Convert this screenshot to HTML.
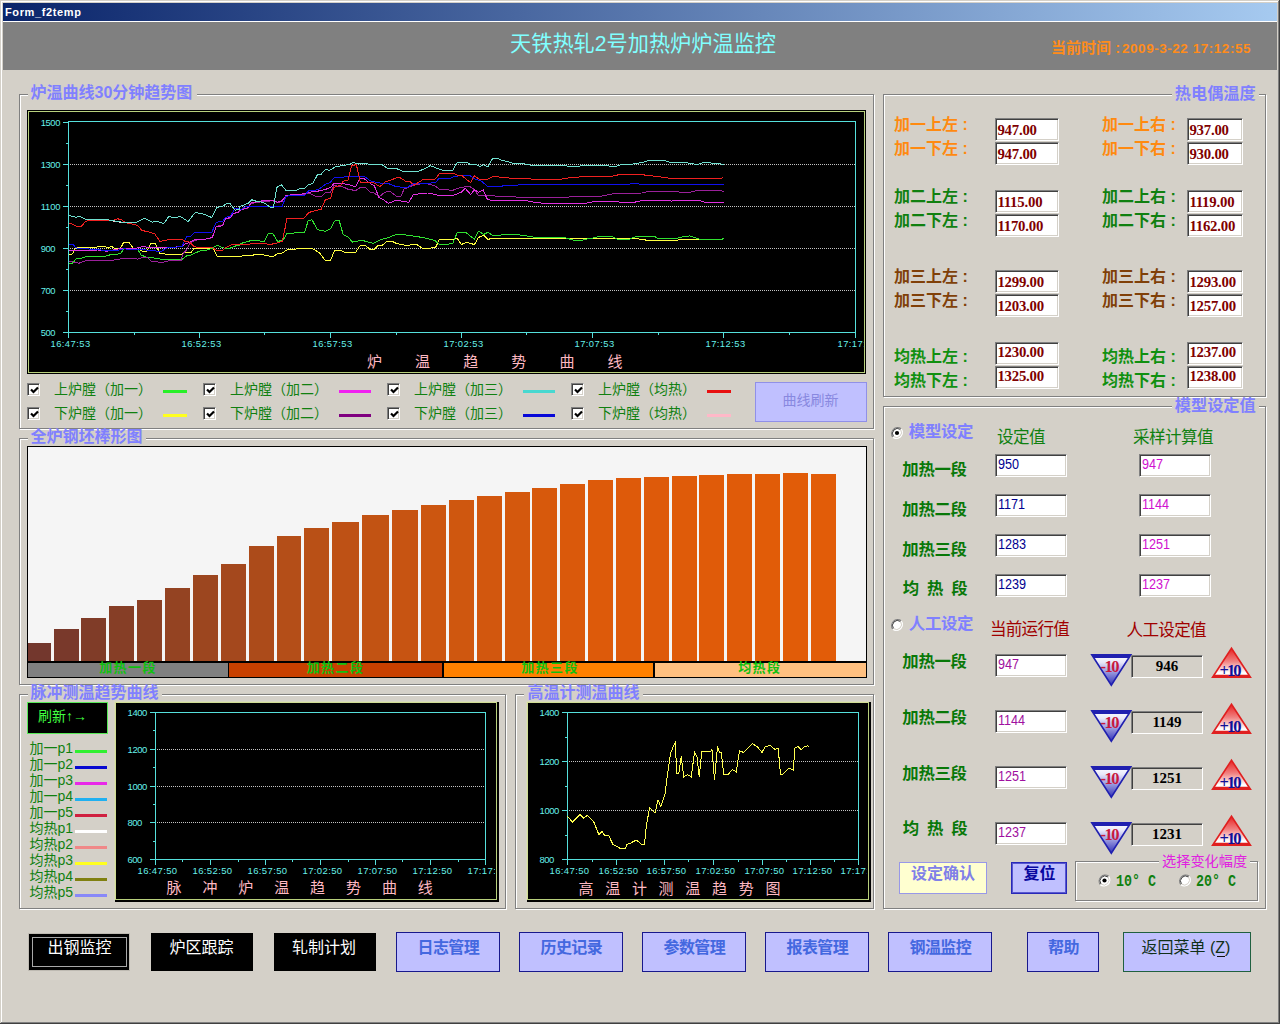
<!DOCTYPE html>
<html lang="zh"><head><meta charset="utf-8"><title>Form_f2temp</title><style>
html,body{margin:0;padding:0}
body{width:1280px;height:1024px;position:relative;overflow:hidden;background:#D4D0C8;font-family:"Liberation Sans",sans-serif}
.a{position:absolute}
.t{position:absolute;white-space:nowrap}
.c{position:absolute;white-space:nowrap}
.c span{position:absolute;left:0;top:0;white-space:nowrap;line-height:1.3;font-family:"Liberation Sans","Noto Sans CJK SC",sans-serif}
.c.b span{font-weight:bold}
.grp{position:absolute;border:1px solid #808080;box-shadow:1px 1px 0 #fff,inset 1px 1px 0 #fff;box-sizing:border-box}
.tb{box-sizing:border-box;background:#fff;border:1px solid;border-color:#808080 #fff #fff #808080;box-shadow:inset 1px 1px 0 #404040,inset -1px -1px 0 #D4D0C8}
.tb.g{background:#D4D0C8}
#pg{position:absolute;left:0;top:0}
#pg text{font-family:"Liberation Sans",sans-serif}

</style></head><body>
<div class="a" style="left:0px;top:0px;width:1280px;height:1024px;background:#D4D0C8"></div>
<div class="a" style="left:1px;top:1px;width:1278px;height:1px;background:#fff"></div>
<div class="a" style="left:1px;top:1px;width:1px;height:1021px;background:#fff"></div>
<div class="a" style="left:0px;top:1023px;width:1280px;height:1px;background:#404040"></div>
<div class="a" style="left:1279px;top:0px;width:1px;height:1024px;background:#404040"></div>
<div class="a" style="left:1px;top:1022px;width:1278px;height:1px;background:#808080"></div>
<div class="a" style="left:1278px;top:1px;width:1px;height:1022px;background:#808080"></div>
<div class="a" style="left:3px;top:3px;width:1274px;height:18px;background:linear-gradient(90deg,#0A246A,#A6CAF0)"></div>
<div class="a" style="left:3px;top:21px;width:1274px;height:1px;background:#fff"></div>
<div class="a" style="left:3px;top:22px;width:1274px;height:48px;background:#808080"></div>
<div class="t" style="left:5px;top:5px;font:bold 11px/14px 'Liberation Sans',sans-serif;color:#fff;letter-spacing:0.632px;">Form_f2temp</div>
<div class="c " style="left:510.00px;top:29.82px;width:265.00px;height:27.56px;color:#80FFFF;font-size:21.20px"><span>天铁热轧2号加热炉炉温监控</span></div>
<div class="c b" style="left:1051.00px;top:37.55px;width:70.35px;height:19.50px;color:#FF8C1A;font-size:15.00px"><span>当前时间 :</span></div>
<div class="t" style="left:1122px;top:41px;font:bold 13.5px/15px 'Liberation Sans',sans-serif;color:#FF8C1A;letter-spacing:0.539px;">2009-3-22 17:12:55</div>
<div class="grp" style="left:19px;top:94px;width:855px;height:335px;"></div>
<div class="a" style="left:28px;top:94px;width:169px;height:2px;background:#D4D0C8"></div>
<div class="grp" style="left:19px;top:438px;width:855px;height:247px;"></div>
<div class="a" style="left:28px;top:438px;width:118px;height:2px;background:#D4D0C8"></div>
<div class="grp" style="left:19px;top:694px;width:487px;height:215px;"></div>
<div class="a" style="left:28px;top:694px;width:134px;height:2px;background:#D4D0C8"></div>
<div class="grp" style="left:515px;top:694px;width:359px;height:215px;"></div>
<div class="a" style="left:524px;top:694px;width:119px;height:2px;background:#D4D0C8"></div>
<div class="grp" style="left:883px;top:94px;width:383px;height:303px;"></div>
<div class="a" style="left:1172px;top:94px;width:87px;height:2px;background:#D4D0C8"></div>
<div class="grp" style="left:883px;top:406px;width:383px;height:503px;"></div>
<div class="a" style="left:1172px;top:406px;width:87px;height:2px;background:#D4D0C8"></div>
<div class="grp" style="left:1075px;top:861px;width:183px;height:40px;"></div>
<div class="a" style="left:1159px;top:861px;width:91px;height:2px;background:#D4D0C8"></div>
<svg id="pg" width="1280" height="1024" viewBox="0 0 1280 1024"><rect x="27" y="110" width="839" height="264" fill="#000"/>
<rect x="28" y="111" width="837" height="1" fill="#B8D07C"/>
<rect x="28" y="372" width="837" height="1" fill="#B8D07C"/>
<rect x="28" y="111" width="1" height="262" fill="#B8D07C"/>
<rect x="864" y="111" width="1" height="262" fill="#B8D07C"/>
<rect x="68" y="121" width="788" height="1" fill="#55E0DC"/>
<rect x="68" y="332" width="788" height="1" fill="#55E0DC"/>
<rect x="68" y="121" width="1" height="212" fill="#55E0DC"/>
<rect x="855" y="121" width="1" height="212" fill="#55E0DC"/>
<rect x="63" y="122" width="5" height="1" fill="#55E0DC"/>
<rect x="66" y="143" width="2" height="1" fill="#55E0DC"/>
<text x="40.7" y="125.884" text-anchor="start" textLength="19.7" lengthAdjust="spacing" font-size="9.4" fill="#66F0EA">1500</text>
<rect x="63" y="164" width="5" height="1" fill="#55E0DC"/>
<line x1="70" y1="164.5" x2="855" y2="164.5" stroke="#C4C4C4" stroke-width="1" stroke-dasharray="1 1"/>
<rect x="66" y="185" width="2" height="1" fill="#55E0DC"/>
<text x="40.7" y="167.884" text-anchor="start" textLength="19.7" lengthAdjust="spacing" font-size="9.4" fill="#66F0EA">1300</text>
<rect x="63" y="206" width="5" height="1" fill="#55E0DC"/>
<line x1="70" y1="206.5" x2="855" y2="206.5" stroke="#C4C4C4" stroke-width="1" stroke-dasharray="1 1"/>
<rect x="66" y="227" width="2" height="1" fill="#55E0DC"/>
<text x="40.7" y="209.884" text-anchor="start" textLength="19.7" lengthAdjust="spacing" font-size="9.4" fill="#66F0EA">1100</text>
<rect x="63" y="248" width="5" height="1" fill="#55E0DC"/>
<line x1="70" y1="248.5" x2="855" y2="248.5" stroke="#C4C4C4" stroke-width="1" stroke-dasharray="1 1"/>
<rect x="66" y="269" width="2" height="1" fill="#55E0DC"/>
<text x="40.7" y="251.884" text-anchor="start" textLength="14.7" lengthAdjust="spacing" font-size="9.4" fill="#66F0EA">900</text>
<rect x="63" y="290" width="5" height="1" fill="#55E0DC"/>
<line x1="70" y1="290.5" x2="855" y2="290.5" stroke="#C4C4C4" stroke-width="1" stroke-dasharray="1 1"/>
<rect x="66" y="311" width="2" height="1" fill="#55E0DC"/>
<text x="40.7" y="293.884" text-anchor="start" textLength="14.7" lengthAdjust="spacing" font-size="9.4" fill="#66F0EA">700</text>
<rect x="63" y="332" width="5" height="1" fill="#55E0DC"/>
<text x="40.7" y="335.884" text-anchor="start" textLength="14.7" lengthAdjust="spacing" font-size="9.4" fill="#66F0EA">500</text>
<rect x="68" y="332" width="1" height="6" fill="#55E0DC"/>
<rect x="134" y="332" width="1" height="3" fill="#55E0DC"/>
<rect x="199" y="332" width="1" height="6" fill="#55E0DC"/>
<rect x="264" y="332" width="1" height="3" fill="#55E0DC"/>
<rect x="330" y="332" width="1" height="6" fill="#55E0DC"/>
<rect x="396" y="332" width="1" height="3" fill="#55E0DC"/>
<rect x="461" y="332" width="1" height="6" fill="#55E0DC"/>
<rect x="526" y="332" width="1" height="3" fill="#55E0DC"/>
<rect x="592" y="332" width="1" height="6" fill="#55E0DC"/>
<rect x="658" y="332" width="1" height="3" fill="#55E0DC"/>
<rect x="723" y="332" width="1" height="6" fill="#55E0DC"/>
<rect x="789" y="332" width="1" height="3" fill="#55E0DC"/>
<rect x="855" y="332" width="1" height="6" fill="#55E0DC"/>
<clipPath id="c27"><rect x="27" y="110" width="837" height="264"/></clipPath><g clip-path="url(#c27)">
<text x="50.5" y="346.984" text-anchor="start" textLength="39.6" lengthAdjust="spacing" font-size="9.4" fill="#66F0EA">16:47:53</text>
<text x="181.5" y="346.984" text-anchor="start" textLength="39.6" lengthAdjust="spacing" font-size="9.4" fill="#66F0EA">16:52:53</text>
<text x="312.5" y="346.984" text-anchor="start" textLength="39.6" lengthAdjust="spacing" font-size="9.4" fill="#66F0EA">16:57:53</text>
<text x="443.5" y="346.984" text-anchor="start" textLength="39.6" lengthAdjust="spacing" font-size="9.4" fill="#66F0EA">17:02:53</text>
<text x="574.5" y="346.984" text-anchor="start" textLength="39.6" lengthAdjust="spacing" font-size="9.4" fill="#66F0EA">17:07:53</text>
<text x="705.5" y="346.984" text-anchor="start" textLength="39.6" lengthAdjust="spacing" font-size="9.4" fill="#66F0EA">17:12:53</text>
<text x="837.5" y="346.984" text-anchor="start" textLength="39.6" lengthAdjust="spacing" font-size="9.4" fill="#66F0EA">17:17:53</text>
</g>
<g fill="none" stroke-width="1" shape-rendering="crispEdges">
<polyline stroke="#FFC0CB" points="85.8,219.8 105.3,219.8 122.5,222.5 136.6,222.5"/>
<polyline stroke="#FFFF40" points="68.6,254.4 72.5,253.9 75.6,247.7 95.9,247.7 99.1,246.1 105.3,246.6 108.4,248.1 111.6,246.1 114.7,248.8 120.2,248.8 123.3,243.0 128.8,242.2 133.4,248.4 138.1,249.2 142.8,251.2 146.7,251.2 150.6,243.8 155.3,243.4 160.0,253.9 181.9,254.4 185.0,252.3 191.2,252.3 194.4,248.1 213.1,248.1 217.0,256.2 239.7,256.6 240.0,256.2 260.3,254.4 272.8,256.6 277.5,253.9 282.2,253.1 286.9,250.0 293.1,249.2 311.9,248.1 319.7,253.1 325.2,260.2 330.6,260.2 334.5,250.8 340.0,250.0 344.7,252.3 355.6,252.3 360.3,245.3 365.0,245.0 369.7,249.2 374.4,249.2 378.3,245.3 382.2,245.3 386.9,241.4 392.3,241.4 396.2,243.4 405.6,245.3 416.6,244.5 422.8,248.4 429.1,248.0 430.0,248.1 435.5,247.7 439.4,239.4 453.4,239.4 457.3,238.3 461.2,244.5 466.7,242.5 474.5,244.5 478.4,237.5 483.9,235.2 487.8,239.4 492.5,238.3 555.0,238.3 619.8,238.8 635.6,238.3 640.3,239.4 648.1,240.3 677.0,240.3 679.4,239.4 721.6,239.4 723.9,238.3"/>
<polyline stroke="#30E030" points="68.6,263.3 72.5,263.3 76.4,258.6 81.9,258.1 85.8,256.6 103.8,256.6 111.6,254.4 120.2,253.9 124.1,248.8 133.4,248.8 138.1,250.0 141.2,255.0 147.5,257.8 156.9,258.1 161.6,259.4 181.9,259.4 186.6,255.9 191.2,255.0 199.1,251.2 206.9,250.0 212.3,248.1 217.0,245.3 222.5,247.7 228.8,248.8 235.0,246.1 239.7,245.3 240.0,243.8 247.8,241.4 252.5,240.3 264.2,241.4 268.1,233.6 272.8,233.6 277.5,241.4 283.0,240.3 286.9,233.6 299.4,232.5 304.8,232.0 308.0,221.1 311.9,219.5 317.3,229.7 325.2,231.2 330.6,228.9 334.5,221.1 339.2,220.6 343.1,234.4 347.8,236.7 352.5,242.2 361.9,240.3 373.6,243.4 380.6,239.8 388.4,237.5 396.2,234.4 404.1,234.7 422.8,237.5 429.1,239.1 430.0,239.4 434.7,240.3 439.4,244.5 445.6,244.5 452.7,243.4 457.3,232.5 465.2,232.0 474.5,239.4 478.4,231.2 483.9,234.4 487.8,232.3 492.5,235.2 498.8,235.2 506.6,234.4 523.8,235.2 530.0,236.7 537.8,237.5 555.0,237.8 564.4,237.5 573.8,240.3 581.6,240.3 586.2,239.1 594.1,237.8 600.3,236.2 611.2,236.2 617.5,239.1 619.8,239.1 629.4,239.1 635.6,236.7 654.4,236.4 657.5,238.3 677.8,238.3 679.4,237.2 687.2,236.7 689.5,235.9 695.0,237.8 699.7,239.1 721.6,239.4 723.9,238.3"/>
<polyline stroke="#9A209A" points="68.6,261.2 74.1,262.2 78.8,263.3 85.8,260.6 113.1,260.2 119.4,259.1 127.2,258.3 138.1,259.1 142.8,257.5 147.5,257.8 151.4,261.2 161.6,262.5 169.4,260.6 181.1,260.2 183.4,253.1 186.6,250.0 189.7,243.8 194.4,240.3 205.3,239.1 212.3,237.8 216.2,226.6 222.5,225.0 225.6,219.1 230.3,218.0 233.4,213.8 239.7,211.7 240.0,209.4 247.8,208.1 250.9,203.9 257.2,202.3 266.6,201.2 272.8,200.8 277.5,202.8 282.2,201.2 286.1,195.6 304.8,194.5 308.8,193.0 315.0,196.1 321.2,196.9 325.2,193.0 330.6,192.2 333.8,185.9 341.6,186.2 347.8,189.1 355.6,190.6 360.3,187.5 365.0,187.2 370.5,192.2 374.4,193.0 379.1,196.9 383.8,193.0 389.2,190.9 396.2,196.1 400.9,196.1 404.1,189.1 413.4,185.2 422.8,183.6 429.1,184.1 430.0,184.7 434.7,185.6 439.4,189.1 445.6,189.1 451.9,190.6 456.6,188.8 461.2,187.5 469.1,186.2 473.8,189.1 478.4,195.3 484.7,195.3 490.9,195.6 503.4,196.9 539.4,197.2 567.5,197.2 573.8,196.1 601.9,196.1 609.7,194.5 615.9,193.0 619.8,193.3 641.9,193.0 648.1,191.4 676.2,191.4 680.9,192.5 688.8,192.5 696.6,190.6 720.0,190.6 723.9,191.4"/>
<polyline stroke="#E030E0" points="68.6,250.0 83.4,250.3 97.5,250.0 106.9,251.2 119.4,248.8 133.4,248.8 141.2,246.9 153.8,247.2 166.2,247.7 181.9,246.6 185.0,243.8 189.7,242.5 194.4,239.8 205.3,239.1 212.3,237.5 216.2,226.6 222.5,225.8 225.6,218.8 230.3,217.5 233.4,213.3 238.1,212.5 239.7,210.2 240.0,210.2 247.8,207.8 250.9,203.1 257.2,201.6 266.6,200.3 272.8,200.0 277.5,202.3 282.2,200.8 286.1,195.3 304.8,193.8 308.8,192.2 316.6,191.4 324.4,189.8 330.6,187.5 333.8,183.6 340.0,183.1 347.8,184.4 355.6,186.7 359.5,178.9 363.4,178.1 368.1,182.0 374.4,185.9 379.1,197.7 383.8,200.0 388.4,203.4 396.2,200.3 408.8,202.3 413.4,194.5 427.5,193.0 430.0,193.0 437.8,195.3 453.4,195.3 461.2,192.2 465.2,188.3 470.6,194.5 474.5,189.8 478.4,192.2 483.1,189.8 487.0,198.8 491.7,200.8 511.2,200.8 523.8,200.3 534.7,202.3 544.1,203.4 584.7,203.4 595.6,201.2 615.9,201.2 619.8,202.2 624.7,202.8 634.1,202.3 643.4,200.3 666.9,200.3 671.6,201.2 674.7,200.3 695.0,200.3 702.8,201.2 705.2,202.8 723.9,202.8"/>
<polyline stroke="#1010F0" points="68.6,244.5 73.3,244.5 75.6,247.7 81.9,248.8 95.9,249.2 105.3,250.8 119.4,250.0 124.1,248.8 133.4,250.0 141.2,249.2 150.6,250.8 161.6,251.2 166.2,248.4 169.4,247.2 181.9,246.9 186.6,236.7 190.5,236.2 194.4,232.8 211.6,232.8 216.2,222.2 222.5,221.6 225.6,217.2 230.3,216.4 235.0,208.6 239.7,208.1 240.0,210.2 244.7,207.0 255.6,206.6 268.1,207.0 282.2,206.2 286.1,196.1 304.8,195.3 308.8,190.6 318.1,189.8 325.2,184.4 329.8,182.8 334.5,177.3 347.8,176.9 365.0,176.9 369.7,180.5 377.5,182.8 388.4,183.6 396.2,186.7 407.2,187.5 413.4,183.6 429.1,183.1 430.0,183.1 435.5,182.5 438.6,178.9 450.3,178.4 455.0,176.2 461.2,175.8 469.1,175.0 474.5,178.9 481.6,181.2 487.8,186.7 500.3,186.7 505.0,185.2 539.4,184.7 619.8,184.7 629.4,184.4 632.5,183.1 637.2,183.1 640.3,184.7 723.9,184.7"/>
<polyline stroke="#F02020" points="68.6,222.7 74.1,225.0 77.2,226.9 81.1,226.6 85.8,221.1 97.5,220.3 105.3,220.6 113.1,220.3 117.8,218.8 121.7,220.0 125.6,222.7 133.4,224.2 137.3,225.3 142.0,230.5 147.5,231.6 154.5,233.6 160.0,241.4 166.2,240.3 169.4,239.4 181.9,239.4 185.0,241.4 189.7,242.2 194.4,246.9 203.8,247.7 212.3,247.7 216.2,250.0 222.5,250.8 225.6,247.7 231.9,244.5 239.7,244.5 240.0,244.5 246.2,245.0 251.7,243.4 263.4,243.4 269.7,244.5 275.9,243.4 282.2,241.4 284.5,231.2 286.9,218.8 304.1,218.0 308.8,212.5 321.2,209.1 325.2,200.0 330.6,198.1 333.8,187.5 340.8,185.2 343.1,181.2 347.8,180.5 351.7,165.3 356.4,164.8 360.3,182.0 365.0,182.8 372.8,182.0 379.8,186.7 385.3,182.0 390.0,180.5 396.2,177.8 400.2,177.8 405.6,181.2 409.5,181.2 414.2,185.2 422.8,179.7 429.1,179.4 430.0,179.7 435.5,178.9 439.4,173.4 453.4,173.4 457.3,175.0 461.2,175.0 466.7,179.7 470.6,182.5 474.5,175.8 480.0,179.7 487.0,179.7 492.5,176.9 497.2,176.6 501.9,177.8 506.6,177.3 511.2,178.9 530.0,178.9 536.2,179.7 558.1,179.7 569.1,177.8 580.0,176.9 601.9,176.9 609.7,176.6 617.5,175.0 619.8,174.8 641.9,174.7 651.2,175.8 666.9,177.8 671.6,178.9 720.0,178.9 723.1,177.3"/>
<polyline stroke="#70E0D0" points="68.6,215.3 75.6,217.2 80.3,216.4 85.8,219.5 105.3,219.5 122.5,222.2 136.6,222.2 144.4,218.3 152.2,222.2 155.3,221.1 163.9,223.4 168.6,216.7 175.6,217.5 180.3,216.4 188.1,221.6 195.2,212.5 203.8,214.1 211.6,217.5 217.0,207.5 222.5,206.2 227.2,203.4 230.3,203.9 235.0,210.2 239.7,209.1 240.0,206.2 244.7,204.7 248.6,203.1 251.7,199.7 257.2,201.6 263.4,202.3 269.7,207.0 273.6,207.0 276.7,187.5 281.4,184.7 286.1,190.6 296.2,190.3 300.2,188.3 304.1,189.1 308.8,184.4 312.7,183.6 317.3,175.0 321.2,174.2 325.2,169.5 329.8,170.3 335.3,166.9 341.6,165.6 347.8,164.8 353.3,162.5 358.8,163.8 367.3,163.8 372.8,164.8 382.2,164.8 386.9,168.0 396.2,168.4 404.1,171.9 416.6,171.9 422.8,169.5 427.5,167.5 430.0,165.6 442.5,170.3 452.7,170.3 457.3,162.2 466.7,162.2 470.6,164.8 476.9,164.8 480.0,166.4 483.9,164.8 487.8,166.9 492.5,158.6 497.2,158.1 501.9,160.6 506.6,161.2 512.8,163.3 523.8,163.8 531.6,165.3 564.4,165.3 570.6,166.9 576.9,166.9 583.1,165.3 606.6,165.3 609.7,166.4 615.9,166.4 619.8,165.0 635.6,163.8 643.4,162.2 648.1,160.6 664.5,160.6 670.0,162.2 687.2,162.8 696.6,164.4 699.7,163.8 705.2,162.2 709.1,162.8 720.0,163.8 723.9,164.4"/>
</g>
<rect x="115" y="702" width="384" height="200" fill="#000"/>
<rect x="114" y="701" width="383" height="1" fill="#D8D8BC"/>
<rect x="114" y="701" width="1" height="199" fill="#D8D8BC"/>
<rect x="115" y="702" width="382" height="1" fill="#D0DC94"/>
<rect x="115" y="702" width="1" height="198" fill="#D0DC94"/>
<rect x="496" y="702" width="1" height="198" fill="#B8D07C"/>
<rect x="115" y="899" width="382" height="1" fill="#B8D07C"/>
<rect x="155" y="712" width="331" height="1" fill="#55E0DC"/>
<rect x="155" y="859" width="331" height="1" fill="#55E0DC"/>
<rect x="155" y="712" width="1" height="148" fill="#55E0DC"/>
<rect x="485" y="712" width="1" height="148" fill="#55E0DC"/>
<rect x="150" y="712" width="5" height="1" fill="#55E0DC"/>
<rect x="153" y="730" width="2" height="1" fill="#55E0DC"/>
<text x="127.6" y="715.92" text-anchor="start" textLength="19.7" lengthAdjust="spacing" font-size="9.5" fill="#66F0EA">1400</text>
<rect x="150" y="749" width="5" height="1" fill="#55E0DC"/>
<line x1="157" y1="749.5" x2="485" y2="749.5" stroke="#C4C4C4" stroke-width="1" stroke-dasharray="1 1"/>
<rect x="153" y="767" width="2" height="1" fill="#55E0DC"/>
<text x="127.6" y="752.92" text-anchor="start" textLength="19.7" lengthAdjust="spacing" font-size="9.5" fill="#66F0EA">1200</text>
<rect x="150" y="786" width="5" height="1" fill="#55E0DC"/>
<line x1="157" y1="786.5" x2="485" y2="786.5" stroke="#C4C4C4" stroke-width="1" stroke-dasharray="1 1"/>
<rect x="153" y="804" width="2" height="1" fill="#55E0DC"/>
<text x="127.6" y="789.92" text-anchor="start" textLength="19.7" lengthAdjust="spacing" font-size="9.5" fill="#66F0EA">1000</text>
<rect x="150" y="822" width="5" height="1" fill="#55E0DC"/>
<line x1="157" y1="822.5" x2="485" y2="822.5" stroke="#C4C4C4" stroke-width="1" stroke-dasharray="1 1"/>
<rect x="153" y="841" width="2" height="1" fill="#55E0DC"/>
<text x="127.6" y="825.92" text-anchor="start" textLength="14.7" lengthAdjust="spacing" font-size="9.5" fill="#66F0EA">800</text>
<rect x="150" y="859" width="5" height="1" fill="#55E0DC"/>
<text x="127.6" y="862.92" text-anchor="start" textLength="14.7" lengthAdjust="spacing" font-size="9.5" fill="#66F0EA">600</text>
<rect x="155" y="859" width="1" height="6" fill="#55E0DC"/>
<rect x="182" y="859" width="1" height="3" fill="#55E0DC"/>
<rect x="210" y="859" width="1" height="6" fill="#55E0DC"/>
<rect x="238" y="859" width="1" height="3" fill="#55E0DC"/>
<rect x="265" y="859" width="1" height="6" fill="#55E0DC"/>
<rect x="292" y="859" width="1" height="3" fill="#55E0DC"/>
<rect x="320" y="859" width="1" height="6" fill="#55E0DC"/>
<rect x="348" y="859" width="1" height="3" fill="#55E0DC"/>
<rect x="375" y="859" width="1" height="6" fill="#55E0DC"/>
<rect x="402" y="859" width="1" height="3" fill="#55E0DC"/>
<rect x="430" y="859" width="1" height="6" fill="#55E0DC"/>
<rect x="458" y="859" width="1" height="3" fill="#55E0DC"/>
<rect x="485" y="859" width="1" height="6" fill="#55E0DC"/>
<clipPath id="c115"><rect x="115" y="702" width="380" height="200"/></clipPath><g clip-path="url(#c115)">
<text x="137.5" y="874.02" text-anchor="start" textLength="39.6" lengthAdjust="spacing" font-size="9.5" fill="#66F0EA">16:47:50</text>
<text x="192.5" y="874.02" text-anchor="start" textLength="39.6" lengthAdjust="spacing" font-size="9.5" fill="#66F0EA">16:52:50</text>
<text x="247.5" y="874.02" text-anchor="start" textLength="39.6" lengthAdjust="spacing" font-size="9.5" fill="#66F0EA">16:57:50</text>
<text x="302.5" y="874.02" text-anchor="start" textLength="39.6" lengthAdjust="spacing" font-size="9.5" fill="#66F0EA">17:02:50</text>
<text x="357.5" y="874.02" text-anchor="start" textLength="39.6" lengthAdjust="spacing" font-size="9.5" fill="#66F0EA">17:07:50</text>
<text x="412.5" y="874.02" text-anchor="start" textLength="39.6" lengthAdjust="spacing" font-size="9.5" fill="#66F0EA">17:12:50</text>
<text x="467.5" y="874.02" text-anchor="start" textLength="39.6" lengthAdjust="spacing" font-size="9.5" fill="#66F0EA">17:17:50</text>
</g>
<rect x="527" y="702" width="344" height="200" fill="#000"/>
<rect x="526" y="701" width="343" height="1" fill="#D8D8BC"/>
<rect x="526" y="701" width="1" height="199" fill="#D8D8BC"/>
<rect x="527" y="702" width="342" height="1" fill="#D0DC94"/>
<rect x="527" y="702" width="1" height="198" fill="#D0DC94"/>
<rect x="868" y="702" width="1" height="198" fill="#B8D07C"/>
<rect x="527" y="899" width="342" height="1" fill="#B8D07C"/>
<rect x="567" y="712" width="292" height="1" fill="#55E0DC"/>
<rect x="567" y="859" width="292" height="1" fill="#55E0DC"/>
<rect x="567" y="712" width="1" height="148" fill="#55E0DC"/>
<rect x="858" y="712" width="1" height="148" fill="#55E0DC"/>
<rect x="562" y="712" width="5" height="1" fill="#55E0DC"/>
<rect x="565" y="737" width="2" height="1" fill="#55E0DC"/>
<text x="539.6" y="715.92" text-anchor="start" textLength="19.7" lengthAdjust="spacing" font-size="9.5" fill="#66F0EA">1400</text>
<rect x="562" y="761" width="5" height="1" fill="#55E0DC"/>
<line x1="569" y1="761.5" x2="858" y2="761.5" stroke="#C4C4C4" stroke-width="1" stroke-dasharray="1 1"/>
<rect x="565" y="786" width="2" height="1" fill="#55E0DC"/>
<text x="539.6" y="764.92" text-anchor="start" textLength="19.7" lengthAdjust="spacing" font-size="9.5" fill="#66F0EA">1200</text>
<rect x="562" y="810" width="5" height="1" fill="#55E0DC"/>
<line x1="569" y1="810.5" x2="858" y2="810.5" stroke="#C4C4C4" stroke-width="1" stroke-dasharray="1 1"/>
<rect x="565" y="835" width="2" height="1" fill="#55E0DC"/>
<text x="539.6" y="813.92" text-anchor="start" textLength="19.7" lengthAdjust="spacing" font-size="9.5" fill="#66F0EA">1000</text>
<rect x="562" y="859" width="5" height="1" fill="#55E0DC"/>
<text x="539.6" y="862.92" text-anchor="start" textLength="14.7" lengthAdjust="spacing" font-size="9.5" fill="#66F0EA">800</text>
<rect x="567" y="859" width="1" height="6" fill="#55E0DC"/>
<rect x="592" y="859" width="1" height="3" fill="#55E0DC"/>
<rect x="616" y="859" width="1" height="6" fill="#55E0DC"/>
<rect x="640" y="859" width="1" height="3" fill="#55E0DC"/>
<rect x="664" y="859" width="1" height="6" fill="#55E0DC"/>
<rect x="688" y="859" width="1" height="3" fill="#55E0DC"/>
<rect x="713" y="859" width="1" height="6" fill="#55E0DC"/>
<rect x="738" y="859" width="1" height="3" fill="#55E0DC"/>
<rect x="762" y="859" width="1" height="6" fill="#55E0DC"/>
<rect x="786" y="859" width="1" height="3" fill="#55E0DC"/>
<rect x="810" y="859" width="1" height="6" fill="#55E0DC"/>
<rect x="834" y="859" width="1" height="3" fill="#55E0DC"/>
<rect x="858" y="859" width="1" height="6" fill="#55E0DC"/>
<clipPath id="c527"><rect x="527" y="702" width="340" height="200"/></clipPath><g clip-path="url(#c527)">
<text x="549.5" y="874.02" text-anchor="start" textLength="39.6" lengthAdjust="spacing" font-size="9.5" fill="#66F0EA">16:47:50</text>
<text x="598.5" y="874.02" text-anchor="start" textLength="39.6" lengthAdjust="spacing" font-size="9.5" fill="#66F0EA">16:52:50</text>
<text x="646.5" y="874.02" text-anchor="start" textLength="39.6" lengthAdjust="spacing" font-size="9.5" fill="#66F0EA">16:57:50</text>
<text x="695.5" y="874.02" text-anchor="start" textLength="39.6" lengthAdjust="spacing" font-size="9.5" fill="#66F0EA">17:02:50</text>
<text x="744.5" y="874.02" text-anchor="start" textLength="39.6" lengthAdjust="spacing" font-size="9.5" fill="#66F0EA">17:07:50</text>
<text x="792.5" y="874.02" text-anchor="start" textLength="39.6" lengthAdjust="spacing" font-size="9.5" fill="#66F0EA">17:12:50</text>
<text x="840.5" y="874.02" text-anchor="start" textLength="39.6" lengthAdjust="spacing" font-size="9.5" fill="#66F0EA">17:17:50</text>
</g>
<polyline fill="none" stroke="#FFFF50" stroke-width="1" shape-rendering="crispEdges" points="567.5,816.5 572.5,822.0 576.2,818.2 580.0,814.5 583.8,818.2 587.5,815.2 593.8,822.0 598.8,834.5 602.0,831.5 605.0,835.8 608.8,835.8 613.0,844.5 620.0,848.2 625.0,849.0 627.0,844.5 631.2,842.8 636.2,840.0 641.2,844.0 644.5,844.5 646.2,827.0 649.5,807.8 655.0,813.2 658.0,800.0 660.8,806.5 665.0,794.5 667.5,774.5 670.5,753.2 675.5,741.5 676.5,773.2 678.8,774.0 681.2,756.5 683.8,777.0 687.5,774.5 691.2,777.0 694.5,752.5 697.0,757.0 699.2,776.5 701.8,751.5 710.0,752.0 712.0,749.5 714.5,779.5 717.5,746.5 719.2,752.0 721.2,752.5 723.8,774.5 728.0,774.5 732.5,769.5 736.2,772.0 739.5,750.8 743.8,752.5 752.5,743.8 757.5,747.0 762.0,752.5 765.0,747.0 770.0,745.2 775.0,749.5 778.2,748.2 780.5,774.5 783.0,774.0 788.8,768.2 793.2,770.0 795.0,748.2 798.2,746.5 801.2,750.0 804.5,746.5 807.5,745.8 809.5,747.5"/>
<rect x="27" y="446" width="840" height="232" fill="#000"/>
<rect x="28" y="447" width="838" height="214" fill="#F5F5F5"/>
<rect x="28" y="643" width="23" height="18" fill="#73372D"/>
<rect x="54" y="629" width="25" height="32" fill="#79392B"/>
<rect x="81" y="618" width="25" height="43" fill="#803C28"/>
<rect x="109" y="606" width="25" height="55" fill="#863E26"/>
<rect x="137" y="600" width="25" height="61" fill="#8C4024"/>
<rect x="165" y="588" width="25" height="73" fill="#944322"/>
<rect x="193" y="575" width="25" height="86" fill="#9C461F"/>
<rect x="221" y="564" width="25" height="97" fill="#A4481D"/>
<rect x="249" y="546" width="25" height="115" fill="#AC4B1A"/>
<rect x="277" y="536" width="24" height="125" fill="#B44E18"/>
<rect x="304" y="528" width="25" height="133" fill="#B95016"/>
<rect x="332" y="522" width="27" height="139" fill="#BE5115"/>
<rect x="362" y="515" width="27" height="146" fill="#C25313"/>
<rect x="392" y="510" width="26" height="151" fill="#C75412"/>
<rect x="421" y="505" width="25" height="156" fill="#CC5610"/>
<rect x="449" y="500" width="25" height="161" fill="#CF570F"/>
<rect x="477" y="496" width="25" height="165" fill="#D2570E"/>
<rect x="505" y="492" width="25" height="169" fill="#D4580D"/>
<rect x="532" y="488" width="25" height="173" fill="#D7590C"/>
<rect x="560" y="484" width="25" height="177" fill="#DA590B"/>
<rect x="588" y="480" width="25" height="181" fill="#DD5A0A"/>
<rect x="616" y="478" width="25" height="183" fill="#DE5A0A"/>
<rect x="644" y="477" width="25" height="184" fill="#DE5A0A"/>
<rect x="672" y="476" width="25" height="185" fill="#DF5B09"/>
<rect x="699" y="475" width="25" height="186" fill="#E05B09"/>
<rect x="727" y="474" width="25" height="187" fill="#E05B09"/>
<rect x="755" y="474" width="25" height="187" fill="#E15C08"/>
<rect x="783" y="473" width="25" height="188" fill="#E15C08"/>
<rect x="811" y="474" width="25" height="187" fill="#E25C08"/>
<rect x="28" y="663" width="200" height="14" fill="#808080"/>
<rect x="229" y="663" width="213" height="14" fill="#C84000"/>
<rect x="444" y="663" width="209" height="14" fill="#FF8000"/>
<rect x="655" y="663" width="211" height="14" fill="#FFC080"/>
<g transform="translate(897,433)"><circle r="5.5" fill="#fff"/><path d="M-4.2 4.2 A6 6 0 0 1 4.2 -4.2" fill="none" stroke="#808080" stroke-width="1.1"/><path d="M-3.5 3.5 A5 5 0 0 1 3.5 -3.5" fill="none" stroke="#404040" stroke-width="1"/><path d="M4.2 -4.2 A6 6 0 0 1 -4.2 4.2" fill="none" stroke="#fff" stroke-width="1.1"/><path d="M3.5 -3.5 A5 5 0 0 1 -3.5 3.5" fill="none" stroke="#D4D0C8" stroke-width="1"/><circle r="2.1" fill="#000"/></g>
<g transform="translate(897,625)"><circle r="5.5" fill="#fff"/><path d="M-4.2 4.2 A6 6 0 0 1 4.2 -4.2" fill="none" stroke="#808080" stroke-width="1.1"/><path d="M-3.5 3.5 A5 5 0 0 1 3.5 -3.5" fill="none" stroke="#404040" stroke-width="1"/><path d="M4.2 -4.2 A6 6 0 0 1 -4.2 4.2" fill="none" stroke="#fff" stroke-width="1.1"/><path d="M3.5 -3.5 A5 5 0 0 1 -3.5 3.5" fill="none" stroke="#D4D0C8" stroke-width="1"/></g>
<defs><linearGradient id="gd" x1="0" y1="0" x2="0" y2="1"><stop offset="0" stop-color="#fff"/><stop offset="0.25" stop-color="#E8E8FA"/><stop offset="1" stop-color="#3030B8"/></linearGradient><linearGradient id="gu" x1="0" y1="0" x2="0" y2="1"><stop offset="0" stop-color="#E82020"/><stop offset="0.45" stop-color="#F08080"/><stop offset="0.85" stop-color="#fff"/><stop offset="1" stop-color="#fff"/></linearGradient></defs>
<path d="M1091.8 654.8 L1130.8 654.8 L1111.3 685.2 Z" fill="url(#gd)" stroke="#2020B0" stroke-width="1.6" stroke-linejoin="miter"/>
<path d="M1091 654 L1131.5 654 L1129 658 L1093.5 658 Z" fill="#2020B0"/>
<path d="M1231.5 648.2 L1212.6 677.2 L1250.4 677.2 Z" fill="url(#gu)" stroke="#E02020" stroke-width="1.6"/>
<path d="M1213.8 674.8 L1249.2 674.8 L1251.3 678 L1211.7 678 Z" fill="#E02020"/>
<path d="M1091.8 710.8 L1130.8 710.8 L1111.3 741.2 Z" fill="url(#gd)" stroke="#2020B0" stroke-width="1.6" stroke-linejoin="miter"/>
<path d="M1091 710 L1131.5 710 L1129 714 L1093.5 714 Z" fill="#2020B0"/>
<path d="M1231.5 704.2 L1212.6 733.2 L1250.4 733.2 Z" fill="url(#gu)" stroke="#E02020" stroke-width="1.6"/>
<path d="M1213.8 730.8 L1249.2 730.8 L1251.3 734 L1211.7 734 Z" fill="#E02020"/>
<path d="M1091.8 766.8 L1130.8 766.8 L1111.3 797.2 Z" fill="url(#gd)" stroke="#2020B0" stroke-width="1.6" stroke-linejoin="miter"/>
<path d="M1091 766 L1131.5 766 L1129 770 L1093.5 770 Z" fill="#2020B0"/>
<path d="M1231.5 760.2 L1212.6 789.2 L1250.4 789.2 Z" fill="url(#gu)" stroke="#E02020" stroke-width="1.6"/>
<path d="M1213.8 786.8 L1249.2 786.8 L1251.3 790 L1211.7 790 Z" fill="#E02020"/>
<path d="M1091.8 822.8 L1130.8 822.8 L1111.3 853.2 Z" fill="url(#gd)" stroke="#2020B0" stroke-width="1.6" stroke-linejoin="miter"/>
<path d="M1091 822 L1131.5 822 L1129 826 L1093.5 826 Z" fill="#2020B0"/>
<path d="M1231.5 816.2 L1212.6 845.2 L1250.4 845.2 Z" fill="url(#gu)" stroke="#E02020" stroke-width="1.6"/>
<path d="M1213.8 842.8 L1249.2 842.8 L1251.3 846 L1211.7 846 Z" fill="#E02020"/>
<g transform="translate(1104.5,880.5)"><circle r="5.5" fill="#fff"/><path d="M-4.2 4.2 A6 6 0 0 1 4.2 -4.2" fill="none" stroke="#808080" stroke-width="1.1"/><path d="M-3.5 3.5 A5 5 0 0 1 3.5 -3.5" fill="none" stroke="#404040" stroke-width="1"/><path d="M4.2 -4.2 A6 6 0 0 1 -4.2 4.2" fill="none" stroke="#fff" stroke-width="1.1"/><path d="M3.5 -3.5 A5 5 0 0 1 -3.5 3.5" fill="none" stroke="#D4D0C8" stroke-width="1"/><circle r="2.1" fill="#000"/></g>
<g transform="translate(1185,880.5)"><circle r="5.5" fill="#fff"/><path d="M-4.2 4.2 A6 6 0 0 1 4.2 -4.2" fill="none" stroke="#808080" stroke-width="1.1"/><path d="M-3.5 3.5 A5 5 0 0 1 3.5 -3.5" fill="none" stroke="#404040" stroke-width="1"/><path d="M4.2 -4.2 A6 6 0 0 1 -4.2 4.2" fill="none" stroke="#fff" stroke-width="1.1"/><path d="M3.5 -3.5 A5 5 0 0 1 -3.5 3.5" fill="none" stroke="#D4D0C8" stroke-width="1"/></g></svg>
<div class="c b" style="left:30.50px;top:83.20px;width:160.00px;height:20.80px;color:#8080FF;font-size:16.00px"><span>炉温曲线30分钟趋势图</span></div>
<div class="c b" style="left:30.50px;top:427.00px;width:112.00px;height:20.80px;color:#8080FF;font-size:16.00px"><span>全炉钢坯棒形图</span></div>
<div class="c b" style="left:30.50px;top:683.00px;width:128.00px;height:20.80px;color:#8080FF;font-size:16.00px"><span>脉冲测温趋势曲线</span></div>
<div class="c b" style="left:527.50px;top:683.00px;width:112.00px;height:20.80px;color:#8080FF;font-size:16.00px"><span>高温计测温曲线</span></div>
<div class="c b" style="left:1174.80px;top:82.87px;width:81.00px;height:21.06px;color:#8080FF;font-size:16.20px"><span>热电偶温度</span></div>
<div class="c b" style="left:1174.80px;top:394.87px;width:81.00px;height:21.06px;color:#8080FF;font-size:16.20px"><span>模型设定值</span></div>
<div class="c " style="left:1162.00px;top:851.77px;width:85.20px;height:18.46px;color:#E020E0;font-size:14.20px"><span>选择变化幅度</span></div>
<div class="c " style="left:367.00px;top:351.75px;width:255.50px;height:19.50px;color:#FFB9C3;font-size:15.00px"><span style="letter-spacing:33.1px">炉温趋势曲线</span></div>
<div class="c " style="left:166.50px;top:878.25px;width:266.00px;height:19.50px;color:#FFB9C3;font-size:15.00px"><span style="letter-spacing:20.9px">脉冲炉温趋势曲线</span></div>
<div class="c " style="left:578.50px;top:878.75px;width:202.00px;height:19.50px;color:#FFB9C3;font-size:15.00px"><span style="letter-spacing:11.7px">高温计测温趋势图</span></div>
<div class="a tb" style="left:27px;top:383px;width:13px;height:13px;"><svg class="a" style="left:2px;top:2px" width="9" height="9" viewBox="0 0 9 9"><path d="M1 3.5 L3.5 6 L8 1.5" fill="none" stroke="#000" stroke-width="2.2" stroke-linecap="butt"/></svg></div>
<div class="c " style="left:54.00px;top:379.90px;width:98.00px;height:18.20px;color:#108010;font-size:14.00px"><span>上炉膛（加一）</span></div>
<div class="a" style="left:162.5px;top:390px;width:24.5px;height:3px;background:#28F028"></div>
<div class="a tb" style="left:27px;top:407px;width:13px;height:13px;"><svg class="a" style="left:2px;top:2px" width="9" height="9" viewBox="0 0 9 9"><path d="M1 3.5 L3.5 6 L8 1.5" fill="none" stroke="#000" stroke-width="2.2" stroke-linecap="butt"/></svg></div>
<div class="c " style="left:54.00px;top:403.90px;width:98.00px;height:18.20px;color:#108010;font-size:14.00px"><span>下炉膛（加一）</span></div>
<div class="a" style="left:162.5px;top:414px;width:24.5px;height:3px;background:#FFFF20"></div>
<div class="a tb" style="left:203px;top:383px;width:13px;height:13px;"><svg class="a" style="left:2px;top:2px" width="9" height="9" viewBox="0 0 9 9"><path d="M1 3.5 L3.5 6 L8 1.5" fill="none" stroke="#000" stroke-width="2.2" stroke-linecap="butt"/></svg></div>
<div class="c " style="left:230.00px;top:379.90px;width:98.00px;height:18.20px;color:#108010;font-size:14.00px"><span>上炉膛（加二）</span></div>
<div class="a" style="left:339px;top:390px;width:32px;height:3px;background:#F020F0"></div>
<div class="a tb" style="left:203px;top:407px;width:13px;height:13px;"><svg class="a" style="left:2px;top:2px" width="9" height="9" viewBox="0 0 9 9"><path d="M1 3.5 L3.5 6 L8 1.5" fill="none" stroke="#000" stroke-width="2.2" stroke-linecap="butt"/></svg></div>
<div class="c " style="left:230.00px;top:403.90px;width:98.00px;height:18.20px;color:#108010;font-size:14.00px"><span>下炉膛（加二）</span></div>
<div class="a" style="left:339px;top:414px;width:32px;height:3px;background:#800080"></div>
<div class="a tb" style="left:387px;top:383px;width:13px;height:13px;"><svg class="a" style="left:2px;top:2px" width="9" height="9" viewBox="0 0 9 9"><path d="M1 3.5 L3.5 6 L8 1.5" fill="none" stroke="#000" stroke-width="2.2" stroke-linecap="butt"/></svg></div>
<div class="c " style="left:414.00px;top:379.90px;width:98.00px;height:18.20px;color:#108010;font-size:14.00px"><span>上炉膛（加三）</span></div>
<div class="a" style="left:523px;top:390px;width:32px;height:3px;background:#48D8D0"></div>
<div class="a tb" style="left:387px;top:407px;width:13px;height:13px;"><svg class="a" style="left:2px;top:2px" width="9" height="9" viewBox="0 0 9 9"><path d="M1 3.5 L3.5 6 L8 1.5" fill="none" stroke="#000" stroke-width="2.2" stroke-linecap="butt"/></svg></div>
<div class="c " style="left:414.00px;top:403.90px;width:98.00px;height:18.20px;color:#108010;font-size:14.00px"><span>下炉膛（加三）</span></div>
<div class="a" style="left:523px;top:414px;width:32px;height:3px;background:#0808D8"></div>
<div class="a tb" style="left:571px;top:383px;width:13px;height:13px;"><svg class="a" style="left:2px;top:2px" width="9" height="9" viewBox="0 0 9 9"><path d="M1 3.5 L3.5 6 L8 1.5" fill="none" stroke="#000" stroke-width="2.2" stroke-linecap="butt"/></svg></div>
<div class="c " style="left:598.00px;top:379.90px;width:98.00px;height:18.20px;color:#108010;font-size:14.00px"><span>上炉膛（均热）</span></div>
<div class="a" style="left:707px;top:390px;width:24px;height:3px;background:#E81010"></div>
<div class="a tb" style="left:571px;top:407px;width:13px;height:13px;"><svg class="a" style="left:2px;top:2px" width="9" height="9" viewBox="0 0 9 9"><path d="M1 3.5 L3.5 6 L8 1.5" fill="none" stroke="#000" stroke-width="2.2" stroke-linecap="butt"/></svg></div>
<div class="c " style="left:598.00px;top:403.90px;width:98.00px;height:18.20px;color:#108010;font-size:14.00px"><span>下炉膛（均热）</span></div>
<div class="a" style="left:707px;top:414px;width:24px;height:3px;background:#FFB8C8"></div>
<div class="a" style="left:755px;top:382px;width:112px;height:40px;background:#C0C0FF;border:1px solid #9090E8;box-sizing:border-box"></div>
<div class="c " style="left:782.50px;top:391.40px;width:56.00px;height:18.20px;color:#8888E0;font-size:14.00px"><span>曲线刷新</span></div>
<div class="c b" style="left:98.50px;top:660.15px;width:57.60px;height:16.90px;color:#10C010;font-size:13.00px"><span style="left:0.7px;letter-spacing:1.4px">加热一段</span></div>
<div class="c b" style="left:306.00px;top:660.15px;width:57.60px;height:16.90px;color:#10C010;font-size:13.00px"><span style="left:0.7px;letter-spacing:1.4px">加热二段</span></div>
<div class="c b" style="left:520.50px;top:660.15px;width:57.60px;height:16.90px;color:#10C010;font-size:13.00px"><span style="left:0.7px;letter-spacing:1.4px">加热三段</span></div>
<div class="c b" style="left:737.50px;top:660.15px;width:43.20px;height:16.90px;color:#10C010;font-size:13.00px"><span style="left:0.7px;letter-spacing:1.4px">均热段</span></div>
<div class="a" style="left:27px;top:702px;width:81px;height:32px;background:#000;border:1px solid #58E858;box-sizing:border-box"></div>
<div class="c " style="left:38.00px;top:707.40px;width:56.00px;height:18.20px;color:#40FF40;font-size:14.00px"><span style="font-family:'Liberation Sans','Noto Sans CJK SC','DejaVu Sans',sans-serif">刷新↑→</span></div>
<div class="c " style="left:29.50px;top:739.40px;width:42.00px;height:18.20px;color:#108010;font-size:14.00px"><span>加一p1</span></div>
<div class="a" style="left:75px;top:750px;width:32px;height:3px;background:#30F030"></div>
<div class="c " style="left:29.50px;top:755.40px;width:42.00px;height:18.20px;color:#108010;font-size:14.00px"><span>加一p2</span></div>
<div class="a" style="left:75px;top:766px;width:32px;height:3px;background:#0808D0"></div>
<div class="c " style="left:29.50px;top:771.40px;width:42.00px;height:18.20px;color:#108010;font-size:14.00px"><span>加一p3</span></div>
<div class="a" style="left:75px;top:782px;width:32px;height:3px;background:#E828E8"></div>
<div class="c " style="left:29.50px;top:787.40px;width:42.00px;height:18.20px;color:#108010;font-size:14.00px"><span>加一p4</span></div>
<div class="a" style="left:75px;top:798px;width:32px;height:3px;background:#20B0F0"></div>
<div class="c " style="left:29.50px;top:803.40px;width:42.00px;height:18.20px;color:#108010;font-size:14.00px"><span>加一p5</span></div>
<div class="a" style="left:75px;top:814px;width:32px;height:3px;background:#D02040"></div>
<div class="c " style="left:29.50px;top:819.40px;width:42.00px;height:18.20px;color:#108010;font-size:14.00px"><span>均热p1</span></div>
<div class="a" style="left:75px;top:830px;width:32px;height:3px;background:#FFFFFF"></div>
<div class="c " style="left:29.50px;top:835.40px;width:42.00px;height:18.20px;color:#108010;font-size:14.00px"><span>均热p2</span></div>
<div class="a" style="left:75px;top:846px;width:32px;height:3px;background:#F08888"></div>
<div class="c " style="left:29.50px;top:851.40px;width:42.00px;height:18.20px;color:#108010;font-size:14.00px"><span>均热p3</span></div>
<div class="a" style="left:75px;top:862px;width:32px;height:3px;background:#FFFF20"></div>
<div class="c " style="left:29.50px;top:867.40px;width:42.00px;height:18.20px;color:#108010;font-size:14.00px"><span>均热p4</span></div>
<div class="a" style="left:75px;top:878px;width:32px;height:3px;background:#808010"></div>
<div class="c " style="left:29.50px;top:883.40px;width:42.00px;height:18.20px;color:#108010;font-size:14.00px"><span>均热p5</span></div>
<div class="a" style="left:75px;top:894px;width:32px;height:3px;background:#8888F8"></div>
<div class="c b" style="left:894.00px;top:115.40px;width:75.04px;height:20.80px;color:#FF8A10;font-size:16.00px"><span>加一上左 :</span></div>
<div class="c b" style="left:1102.00px;top:115.40px;width:75.04px;height:20.80px;color:#FF8A10;font-size:16.00px"><span>加一上右 :</span></div>
<div class="a tb" style="left:995px;top:118px;width:64px;height:23px;"></div>
<div class="t" style="left:997.4px;top:121.5px;font:bold 14.8px/17.02px 'Liberation Serif',serif;color:#800000;letter-spacing:-0.220px;">947.00</div>
<div class="a tb" style="left:1187px;top:118px;width:56px;height:23px;"></div>
<div class="t" style="left:1189.4px;top:121.5px;font:bold 14.8px/17.02px 'Liberation Serif',serif;color:#800000;letter-spacing:-0.220px;">937.00</div>
<div class="c b" style="left:894.00px;top:139.40px;width:75.04px;height:20.80px;color:#FF8A10;font-size:16.00px"><span>加一下左 :</span></div>
<div class="c b" style="left:1102.00px;top:139.40px;width:75.04px;height:20.80px;color:#FF8A10;font-size:16.00px"><span>加一下右 :</span></div>
<div class="a tb" style="left:995px;top:142px;width:64px;height:23px;"></div>
<div class="t" style="left:997.4px;top:145.5px;font:bold 14.8px/17.02px 'Liberation Serif',serif;color:#800000;letter-spacing:-0.220px;">947.00</div>
<div class="a tb" style="left:1187px;top:142px;width:56px;height:23px;"></div>
<div class="t" style="left:1189.4px;top:145.5px;font:bold 14.8px/17.02px 'Liberation Serif',serif;color:#800000;letter-spacing:-0.220px;">930.00</div>
<div class="c b" style="left:894.00px;top:187.40px;width:75.04px;height:20.80px;color:#108010;font-size:16.00px"><span>加二上左 :</span></div>
<div class="c b" style="left:1102.00px;top:187.40px;width:75.04px;height:20.80px;color:#108010;font-size:16.00px"><span>加二上右 :</span></div>
<div class="a tb" style="left:995px;top:190px;width:64px;height:23px;"></div>
<div class="t" style="left:997.4px;top:193.5px;font:bold 14.8px/17.02px 'Liberation Serif',serif;color:#800000;letter-spacing:-0.217px;">1115.00</div>
<div class="a tb" style="left:1187px;top:190px;width:56px;height:23px;"></div>
<div class="t" style="left:1189.4px;top:193.5px;font:bold 14.8px/17.02px 'Liberation Serif',serif;color:#800000;letter-spacing:-0.217px;">1119.00</div>
<div class="c b" style="left:894.00px;top:211.40px;width:75.04px;height:20.80px;color:#108010;font-size:16.00px"><span>加二下左 :</span></div>
<div class="c b" style="left:1102.00px;top:211.40px;width:75.04px;height:20.80px;color:#108010;font-size:16.00px"><span>加二下右 :</span></div>
<div class="a tb" style="left:995px;top:214px;width:64px;height:23px;"></div>
<div class="t" style="left:997.4px;top:217.5px;font:bold 14.8px/17.02px 'Liberation Serif',serif;color:#800000;letter-spacing:-0.217px;">1170.00</div>
<div class="a tb" style="left:1187px;top:214px;width:56px;height:23px;"></div>
<div class="t" style="left:1189.4px;top:217.5px;font:bold 14.8px/17.02px 'Liberation Serif',serif;color:#800000;letter-spacing:-0.217px;">1162.00</div>
<div class="c b" style="left:894.00px;top:267.40px;width:75.04px;height:20.80px;color:#804008;font-size:16.00px"><span>加三上左 :</span></div>
<div class="c b" style="left:1102.00px;top:267.40px;width:75.04px;height:20.80px;color:#804008;font-size:16.00px"><span>加三上右 :</span></div>
<div class="a tb" style="left:995px;top:270px;width:64px;height:23px;"></div>
<div class="t" style="left:997.4px;top:273.5px;font:bold 14.8px/17.02px 'Liberation Serif',serif;color:#800000;letter-spacing:-0.217px;">1299.00</div>
<div class="a tb" style="left:1187px;top:270px;width:56px;height:23px;"></div>
<div class="t" style="left:1189.4px;top:273.5px;font:bold 14.8px/17.02px 'Liberation Serif',serif;color:#800000;letter-spacing:-0.217px;">1293.00</div>
<div class="c b" style="left:894.00px;top:291.40px;width:75.04px;height:20.80px;color:#804008;font-size:16.00px"><span>加三下左 :</span></div>
<div class="c b" style="left:1102.00px;top:291.40px;width:75.04px;height:20.80px;color:#804008;font-size:16.00px"><span>加三下右 :</span></div>
<div class="a tb" style="left:995px;top:294px;width:64px;height:23px;"></div>
<div class="t" style="left:997.4px;top:297.5px;font:bold 14.8px/17.02px 'Liberation Serif',serif;color:#800000;letter-spacing:-0.217px;">1203.00</div>
<div class="a tb" style="left:1187px;top:294px;width:56px;height:23px;"></div>
<div class="t" style="left:1189.4px;top:297.5px;font:bold 14.8px/17.02px 'Liberation Serif',serif;color:#800000;letter-spacing:-0.217px;">1257.00</div>
<div class="c b" style="left:894.00px;top:346.90px;width:75.04px;height:20.80px;color:#109010;font-size:16.00px"><span>均热上左 :</span></div>
<div class="c b" style="left:1102.00px;top:346.90px;width:75.04px;height:20.80px;color:#109010;font-size:16.00px"><span>均热上右 :</span></div>
<div class="a tb" style="left:995px;top:342px;width:64px;height:23px;"></div>
<div class="t" style="left:997.4px;top:343.5px;font:bold 14.8px/17.02px 'Liberation Serif',serif;color:#800000;letter-spacing:-0.217px;">1230.00</div>
<div class="a tb" style="left:1187px;top:342px;width:56px;height:23px;"></div>
<div class="t" style="left:1189.4px;top:343.5px;font:bold 14.8px/17.02px 'Liberation Serif',serif;color:#800000;letter-spacing:-0.217px;">1237.00</div>
<div class="c b" style="left:894.00px;top:370.90px;width:75.04px;height:20.80px;color:#109010;font-size:16.00px"><span>均热下左 :</span></div>
<div class="c b" style="left:1102.00px;top:370.90px;width:75.04px;height:20.80px;color:#109010;font-size:16.00px"><span>均热下右 :</span></div>
<div class="a tb" style="left:995px;top:366px;width:64px;height:23px;"></div>
<div class="t" style="left:997.4px;top:367.5px;font:bold 14.8px/17.02px 'Liberation Serif',serif;color:#800000;letter-spacing:-0.217px;">1325.00</div>
<div class="a tb" style="left:1187px;top:366px;width:56px;height:23px;"></div>
<div class="t" style="left:1189.4px;top:367.5px;font:bold 14.8px/17.02px 'Liberation Serif',serif;color:#800000;letter-spacing:-0.217px;">1238.00</div>
<div class="c b" style="left:908.80px;top:420.74px;width:64.40px;height:21.32px;color:#8080FF;font-size:16.40px"><span style="letter-spacing:-0.3px">模型设定</span></div>
<div class="c b" style="left:908.80px;top:612.74px;width:64.40px;height:21.32px;color:#8080FF;font-size:16.40px"><span style="letter-spacing:-0.3px">人工设定</span></div>
<div class="c " style="left:997.00px;top:427.21px;width:48.00px;height:21.58px;color:#108010;font-size:16.60px"><span style="letter-spacing:-0.6px">设定值</span></div>
<div class="c " style="left:1133.00px;top:427.21px;width:80.00px;height:21.58px;color:#108010;font-size:16.60px"><span style="letter-spacing:-0.6px">采样计算值</span></div>
<div class="c " style="left:990.00px;top:619.01px;width:79.00px;height:21.58px;color:#A00000;font-size:16.60px"><span style="letter-spacing:-0.8px">当前运行值</span></div>
<div class="c " style="left:1126.50px;top:619.51px;width:79.50px;height:21.58px;color:#A00000;font-size:16.60px"><span style="letter-spacing:-0.7px">人工设定值</span></div>
<div class="c b" style="left:902.30px;top:458.74px;width:64.40px;height:21.32px;color:#087808;font-size:16.40px"><span style="letter-spacing:-0.3px">加热一段</span></div>
<div class="a tb" style="left:995px;top:454px;width:72px;height:23px;"></div>
<div class="t" style="left:998px;top:456.4px;font:normal 14px/16.1px 'Liberation Sans',sans-serif;color:#000090;transform:scale(0.9,1);transform-origin:0 0;">950</div>
<div class="a tb" style="left:1139px;top:454px;width:72px;height:23px;"></div>
<div class="t" style="left:1142px;top:456.4px;font:normal 14px/16.1px 'Liberation Sans',sans-serif;color:#D010D0;transform:scale(0.9,1);transform-origin:0 0;">947</div>
<div class="c b" style="left:902.30px;top:498.74px;width:64.40px;height:21.32px;color:#087808;font-size:16.40px"><span style="letter-spacing:-0.3px">加热二段</span></div>
<div class="a tb" style="left:995px;top:494px;width:72px;height:23px;"></div>
<div class="t" style="left:998px;top:496.4px;font:normal 14px/16.1px 'Liberation Sans',sans-serif;color:#000090;transform:scale(0.9,1);transform-origin:0 0;">1171</div>
<div class="a tb" style="left:1139px;top:494px;width:72px;height:23px;"></div>
<div class="t" style="left:1142px;top:496.4px;font:normal 14px/16.1px 'Liberation Sans',sans-serif;color:#D010D0;transform:scale(0.9,1);transform-origin:0 0;">1144</div>
<div class="c b" style="left:902.30px;top:538.74px;width:64.40px;height:21.32px;color:#087808;font-size:16.40px"><span style="letter-spacing:-0.3px">加热三段</span></div>
<div class="a tb" style="left:995px;top:534px;width:72px;height:23px;"></div>
<div class="t" style="left:998px;top:536.4px;font:normal 14px/16.1px 'Liberation Sans',sans-serif;color:#000090;transform:scale(0.9,1);transform-origin:0 0;">1283</div>
<div class="a tb" style="left:1139px;top:534px;width:72px;height:23px;"></div>
<div class="t" style="left:1142px;top:536.4px;font:normal 14px/16.1px 'Liberation Sans',sans-serif;color:#D010D0;transform:scale(0.9,1);transform-origin:0 0;">1251</div>
<div class="c b" style="left:902.80px;top:578.34px;width:64.90px;height:21.32px;color:#087808;font-size:16.40px"><span style="letter-spacing:7.8px">均热段</span></div>
<div class="a tb" style="left:995px;top:574px;width:72px;height:23px;"></div>
<div class="t" style="left:998px;top:576.4px;font:normal 14px/16.1px 'Liberation Sans',sans-serif;color:#000090;transform:scale(0.9,1);transform-origin:0 0;">1239</div>
<div class="a tb" style="left:1139px;top:574px;width:72px;height:23px;"></div>
<div class="t" style="left:1142px;top:576.4px;font:normal 14px/16.1px 'Liberation Sans',sans-serif;color:#D010D0;transform:scale(0.9,1);transform-origin:0 0;">1237</div>
<div class="c b" style="left:902.30px;top:650.64px;width:64.40px;height:21.32px;color:#087808;font-size:16.40px"><span style="letter-spacing:-0.3px">加热一段</span></div>
<div class="a tb" style="left:995px;top:654px;width:72px;height:23px;"></div>
<div class="t" style="left:998px;top:656.4px;font:normal 14px/16.1px 'Liberation Sans',sans-serif;color:#A010A0;transform:scale(0.9,1);transform-origin:0 0;">947</div>
<div class="t" style="left:1100.5px;top:658px;font:bold 16.5px/18.975px 'Liberation Serif',serif;color:#C81840;letter-spacing:-1.497px;">-10</div>
<div class="a tb g" style="left:1131px;top:655px;width:72px;height:23px;"></div>
<div class="t" style="left:1131px;top:658px;width:72px;text-align:center;font:bold 15px/17.25px 'Liberation Serif',serif;color:#000">946</div>
<div class="t" style="left:1219.5px;top:661.5px;font:bold 16.5px/18.975px 'Liberation Serif',serif;color:#101098;letter-spacing:-1.951px;">+10</div>
<div class="c b" style="left:902.30px;top:706.64px;width:64.40px;height:21.32px;color:#087808;font-size:16.40px"><span style="letter-spacing:-0.3px">加热二段</span></div>
<div class="a tb" style="left:995px;top:710px;width:72px;height:23px;"></div>
<div class="t" style="left:998px;top:712.4px;font:normal 14px/16.1px 'Liberation Sans',sans-serif;color:#A010A0;transform:scale(0.9,1);transform-origin:0 0;">1144</div>
<div class="t" style="left:1100.5px;top:714px;font:bold 16.5px/18.975px 'Liberation Serif',serif;color:#C81840;letter-spacing:-1.497px;">-10</div>
<div class="a tb g" style="left:1131px;top:711px;width:72px;height:23px;"></div>
<div class="t" style="left:1131px;top:714px;width:72px;text-align:center;font:bold 15px/17.25px 'Liberation Serif',serif;color:#000">1149</div>
<div class="t" style="left:1219.5px;top:717.5px;font:bold 16.5px/18.975px 'Liberation Serif',serif;color:#101098;letter-spacing:-1.951px;">+10</div>
<div class="c b" style="left:902.30px;top:762.64px;width:64.40px;height:21.32px;color:#087808;font-size:16.40px"><span style="letter-spacing:-0.3px">加热三段</span></div>
<div class="a tb" style="left:995px;top:766px;width:72px;height:23px;"></div>
<div class="t" style="left:998px;top:768.4px;font:normal 14px/16.1px 'Liberation Sans',sans-serif;color:#A010A0;transform:scale(0.9,1);transform-origin:0 0;">1251</div>
<div class="t" style="left:1100.5px;top:770px;font:bold 16.5px/18.975px 'Liberation Serif',serif;color:#C81840;letter-spacing:-1.497px;">-10</div>
<div class="a tb g" style="left:1131px;top:767px;width:72px;height:23px;"></div>
<div class="t" style="left:1131px;top:770px;width:72px;text-align:center;font:bold 15px/17.25px 'Liberation Serif',serif;color:#000">1251</div>
<div class="t" style="left:1219.5px;top:773.5px;font:bold 16.5px/18.975px 'Liberation Serif',serif;color:#101098;letter-spacing:-1.951px;">+10</div>
<div class="c b" style="left:902.80px;top:818.34px;width:64.90px;height:21.32px;color:#087808;font-size:16.40px"><span style="letter-spacing:7.8px">均热段</span></div>
<div class="a tb" style="left:995px;top:822px;width:72px;height:23px;"></div>
<div class="t" style="left:998px;top:824.4px;font:normal 14px/16.1px 'Liberation Sans',sans-serif;color:#A010A0;transform:scale(0.9,1);transform-origin:0 0;">1237</div>
<div class="t" style="left:1100.5px;top:826px;font:bold 16.5px/18.975px 'Liberation Serif',serif;color:#C81840;letter-spacing:-1.497px;">-10</div>
<div class="a tb g" style="left:1131px;top:823px;width:72px;height:23px;"></div>
<div class="t" style="left:1131px;top:826px;width:72px;text-align:center;font:bold 15px/17.25px 'Liberation Serif',serif;color:#000">1231</div>
<div class="t" style="left:1219.5px;top:829.5px;font:bold 16.5px/18.975px 'Liberation Serif',serif;color:#101098;letter-spacing:-1.951px;">+10</div>
<div class="a" style="left:899px;top:862px;width:88px;height:32px;background:#FFFFD0;border:1px solid #9898E8;box-sizing:border-box"></div>
<div class="c b" style="left:911.00px;top:863.60px;width:64.00px;height:20.80px;color:#8080E8;font-size:16.00px"><span>设定确认</span></div>
<div class="a" style="left:1011px;top:862px;width:56px;height:32px;background:#C0C0FF;border:1px solid #2828B8;box-sizing:border-box;box-shadow:inset 0 0 0 1px #5858D0"></div>
<div class="c b" style="left:1023.50px;top:864.10px;width:32.00px;height:20.80px;color:#0808A0;font-size:16.00px"><span>复位</span></div>
<div class="t" style="left:1116px;top:872.6px;font:bold 13.33px/15.3295px 'Liberation Mono',monospace;color:#108010;transform:scale(1,1.22);transform-origin:0 0;">10° C</div>
<div class="t" style="left:1196px;top:872.6px;font:bold 13.33px/15.3295px 'Liberation Mono',monospace;color:#108010;transform:scale(1,1.22);transform-origin:0 0;">20° C</div>
<div class="a" style="left:28px;top:933px;width:102px;height:38px;background:#000;border:1px solid #BEBAB2;box-sizing:border-box"></div>
<div class="a" style="left:32px;top:937px;width:95px;height:30px;border:1px solid #A8A8A8;box-sizing:border-box"></div>
<div class="a" style="left:151px;top:933px;width:102px;height:38px;background:#000"></div>
<div class="a" style="left:274px;top:933px;width:102px;height:38px;background:#000"></div>
<div class="c " style="left:47.50px;top:937.90px;width:64.00px;height:20.80px;color:#fff;font-size:16.00px"><span>出钢监控</span></div>
<div class="c " style="left:169.50px;top:937.90px;width:64.00px;height:20.80px;color:#fff;font-size:16.00px"><span>炉区跟踪</span></div>
<div class="c " style="left:292.00px;top:937.90px;width:64.00px;height:20.80px;color:#fff;font-size:16.00px"><span>轧制计划</span></div>
<div class="a" style="left:396px;top:932px;width:104px;height:40px;background:#C0C0FF;border:1px solid #18188C;box-sizing:border-box"></div>
<div class="c b" style="left:417.50px;top:937.90px;width:61.60px;height:20.80px;color:#4468E0;font-size:16.00px"><span style="letter-spacing:-0.6px">日志管理</span></div>
<div class="a" style="left:519px;top:932px;width:104px;height:40px;background:#C0C0FF;border:1px solid #18188C;box-sizing:border-box"></div>
<div class="c b" style="left:540.50px;top:937.90px;width:61.60px;height:20.80px;color:#4468E0;font-size:16.00px"><span style="letter-spacing:-0.6px">历史记录</span></div>
<div class="a" style="left:642px;top:932px;width:104px;height:40px;background:#C0C0FF;border:1px solid #18188C;box-sizing:border-box"></div>
<div class="c b" style="left:663.50px;top:937.90px;width:61.60px;height:20.80px;color:#4468E0;font-size:16.00px"><span style="letter-spacing:-0.6px">参数管理</span></div>
<div class="a" style="left:765px;top:932px;width:104px;height:40px;background:#C0C0FF;border:1px solid #18188C;box-sizing:border-box"></div>
<div class="c b" style="left:786.50px;top:937.90px;width:61.60px;height:20.80px;color:#4468E0;font-size:16.00px"><span style="letter-spacing:-0.6px">报表管理</span></div>
<div class="a" style="left:888px;top:932px;width:104px;height:40px;background:#C0C0FF;border:1px solid #18188C;box-sizing:border-box"></div>
<div class="c b" style="left:909.50px;top:937.90px;width:61.60px;height:20.80px;color:#4468E0;font-size:16.00px"><span style="letter-spacing:-0.6px">钢温监控</span></div>
<div class="a" style="left:1027px;top:932px;width:72px;height:40px;background:#C0C0FF;border:1px solid #18188C;box-sizing:border-box"></div>
<div class="c b" style="left:1048.00px;top:937.90px;width:30.80px;height:20.80px;color:#4468E0;font-size:16.00px"><span style="letter-spacing:-0.6px">帮助</span></div>
<div class="a" style="left:1123px;top:932px;width:128px;height:40px;background:#C0C0FF;border:1px solid #206040;box-sizing:border-box"></div>
<div class="c " style="left:1141.50px;top:938.10px;width:91.04px;height:20.80px;color:#103018;font-size:16.00px"><span>返回菜单 (Z)</span></div>
<div class="a" style="left:1217px;top:956px;width:8px;height:1px;background:#101010"></div>
</body></html>
